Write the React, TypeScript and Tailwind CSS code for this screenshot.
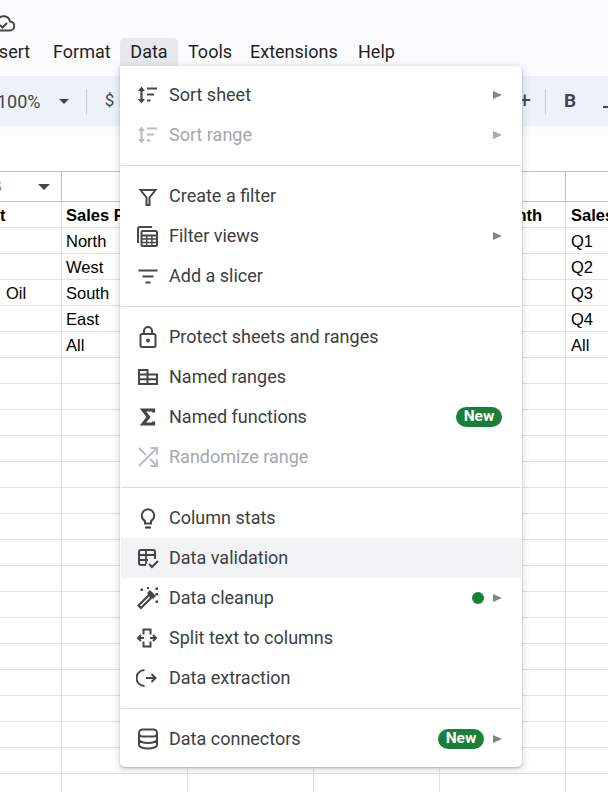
const sheetRows = [
  ["t", "Sales F", "Sales Month", "Sales"],
  ["", "North", "", "Q1"],
  ["", "West", "", "Q2"],
  ["Oil", "South", "", "Q3"],
  ["", "East", "", "Q4"],
  ["", "All", "", "All"],
];

const Icon = ({ children, muted }: { children: React.ReactNode; muted?: boolean }) => (
  <svg
    viewBox="0 0 24 24"
    className={`h-6 w-6 shrink-0 ${muted ? "text-[#b9bcc0]" : "text-[#444746]"}`}
    fill="none"
    stroke="currentColor"
    strokeWidth="2"
  >
    {children}
  </svg>
);

const icons: Record<string, React.ReactNode> = {
  sort: (
    <>
      <path d="M5.500 6v12" strokeWidth="2.200" />
      <path d="M2 8l3.500-4.500L9 8zM2 16l3.500 4.500L9 16z" fill="currentColor" stroke="none" />
      <path d="M11 5.500h10M11 11.500h7M11 17.500h3.500" strokeWidth="1.800" />
    </>
  ),
  filter: <path d="M4.500 6h15l-6 7.500V21h-3v-7.500z" strokeWidth="2" />,
  views: (
    <>
      <path d="M2 19V5a2 2 0 0 1 2-2h12" />
      <rect x="5.500" y="7" width="15.500" height="15" rx="1.500" />
      <path d="M5.500 11.500H21" strokeWidth="2" />
      <path d="M5.500 15h15.500M5.500 18.500h15.500M10.700 11.500V22M15.900 11.500V22" strokeWidth="1.400" />
    </>
  ),
  slicer: <path d="M2.500 6.500h19M6.500 12.500h11M9.500 18.500h5" />,
  lock: (
    <>
      <rect x="4.500" y="9" width="15" height="13" rx="1.500" />
      <path d="M8 9V6a4 4 0 0 1 8 0v3" />
      <circle cx="12" cy="15.500" r="2" fill="currentColor" stroke="none" />
    </>
  ),
  ranges: <path d="M3 5h8.500v14H3zM11.500 9.500H21V19h-9.500M3 9.500h8.500M3 14.200h18M11.500 9.500V19" />,
  sigma: <path d="M17.500 7.500V5H7l5.500 7L7 19h10.500v-2.500" strokeWidth="3.200" />,
  random: <path d="m3 3 7 7M3 21 21 3M14.500 3H21v6.500M14 14l7 7M14.500 21H21v-6.500" />,
  bulb: (
    <>
      <path d="M9 17.500h6v-2.300c2-1.300 3.200-3.300 3.200-5.700a6.200 6.200 0 0 0-12.400 0c0 2.400 1.200 4.400 3.200 5.700z" />
      <path d="M9 21.500h6" strokeWidth="2.200" />
    </>
  ),
  validate: (
    <>
      <path d="M10 19H5a2 2 0 0 1-2-2V6a2 2 0 0 1 2-2h12a2 2 0 0 1 2 2v7" />
      <path d="M3 9h16M3 14h9M10 4v14" strokeWidth="1.800" />
      <path d="m13 18 3 3 6-6" />
    </>
  ),
  wand: (
    <>
      <path d="M2.500 19.500 13 9l2.500 2.500L5 22z" strokeWidth="2.200" />
      <path d="m12.500 5.500 6 6" strokeWidth="4" />
      <path
        d="M4.500 2.500H7v2.500H4.500zM11 1h2v2h-2zM19.500 1.500H22V4h-2.500zM19.500 7H22v2.500h-2.500zM19.500 14.500H22V17h-2.500z"
        fill="currentColor"
        stroke="none"
      />
    </>
  ),
  split: (
    <>
      <path d="M7.500 8.500v-5h7v5M7.500 15.500v5h7v-5" strokeWidth="2" />
      <path d="M2 12h6M14 12h6M5 9l-3 3 3 3M17 9l3 3-3 3" strokeWidth="2" />
    </>
  ),
  extract: (
    <>
      <path d="M8.500 4a8 8 0 0 0 0 16" strokeWidth="2" />
      <path d="M10 12h9.500M15.500 8l4 4-4 4" strokeWidth="2" />
    </>
  ),
  db: (
    <>
      <rect x="3" y="2.500" width="18" height="7" rx="3.500" />
      <path d="M3 6v12c0 2 4 3.500 9 3.500s9-1.500 9-3.500V6M3 12.500c0 2 4 3.500 9 3.500s9-1.500 9-3.500" />
    </>
  ),
};

const NewBadge = () => (
  <span className="flex h-5 w-[46px] items-center justify-center rounded-full bg-[#188038] text-[15.500px] font-bold text-white">
    New
  </span>
);

const Arrow = ({ muted }: { muted?: boolean }) => (
  <span
    className={`block h-0 w-0 border-y-[4.500px] border-l-[9px] border-y-transparent ${
      muted ? "border-l-[#a9abae]" : "border-l-[#80868b]"
    }`}
  />
);

type Item = {
  label: string;
  icon: string;
  muted?: boolean;
  arrow?: boolean;
  badge?: boolean;
  dot?: boolean;
  hover?: boolean;
};

const groups: Item[][] = [
  [
    { label: "Sort sheet", icon: "sort", arrow: true },
    { label: "Sort range", icon: "sort", arrow: true, muted: true },
  ],
  [
    { label: "Create a filter", icon: "filter" },
    { label: "Filter views", icon: "views", arrow: true },
    { label: "Add a slicer", icon: "slicer" },
  ],
  [
    { label: "Protect sheets and ranges", icon: "lock" },
    { label: "Named ranges", icon: "ranges" },
    { label: "Named functions", icon: "sigma", badge: true },
    { label: "Randomize range", icon: "random", muted: true },
  ],
  [
    { label: "Column stats", icon: "bulb" },
    { label: "Data validation", icon: "validate", hover: true },
    { label: "Data cleanup", icon: "wand", dot: true, arrow: true },
    { label: "Split text to columns", icon: "split" },
    { label: "Data extraction", icon: "extract" },
  ],
  [{ label: "Data connectors", icon: "db", badge: true, arrow: true }],
];

function DataMenu() {
  return (
    <div className="absolute left-[120px] top-[66px] w-[402px] rounded-b-[5px] rounded-tr-[5px] bg-white pb-2 pt-[9px] pr-px pl-px shadow-[0_2px_6px_2px_rgba(60,64,67,0.15),0_1px_2px_rgba(60,64,67,0.3)]">
      {groups.map((group, i) => (
        <div key={i}>
          {i > 0 && (
            <div className="flex h-[21px] items-center">
              <div className="h-px w-full bg-[#dadce0]" />
            </div>
          )}
          {group.map((item) => (
            <div
              key={item.label}
              className={`flex h-10 items-center pl-[15px] pr-[19px] ${item.hover ? "bg-[#f1f3f4]" : ""}`}
            >
              <Icon muted={item.muted}>{icons[item.icon]}</Icon>
              <span
                className={`ml-[9px] flex-1 pb-0.5 text-[18px] ${
                  item.muted ? "text-[#a4a7ab]" : "text-[#3c4043]"
                }`}
              >
                {item.label}
              </span>
              {item.dot && <span className="h-3 w-3 rounded-full bg-[#188038]" />}
              {item.badge && <NewBadge />}
              {item.arrow && (
                <span className="ml-[9px]">
                  <Arrow muted={item.muted} />
                </span>
              )}
            </div>
          ))}
        </div>
      ))}
    </div>
  );
}

export default function App() {
  const emptyRows = Array.from({ length: 17 }, (_, i) => i);
  return (
    <div className="relative h-[792px] w-[608px] overflow-hidden bg-white font-['Roboto',sans-serif]">
      {/* header */}
      <div className="h-[76px] overflow-hidden bg-[#f9fbfd]">
        <svg viewBox="0 0 24 24" className="-ml-[9px] mt-[11px] h-6 w-6 text-[#444746]" fill="none" stroke="currentColor" strokeWidth="2">
          <path d="M7 19.500a5 5 0 0 1-.5-10A6.500 6.500 0 0 1 19 10.500a4.500 4.500 0 0 1-.5 9z" />
          <path d="m9 14 2.500 2.500L16 12" />
        </svg>
        <div className="-ml-[16px] mt-[3px] flex h-7 items-center text-[18px] text-[#1f1f1f]">
          <span className="w-[69px] pb-0.5">Insert</span>
          <span className="w-[67px] pb-0.5">Format</span>
          <span className="flex h-7 w-[58px] items-center justify-center rounded-t-[5px] bg-[#e6e9ec] pb-0.5">Data</span>
          <span className="ml-[10px] w-[62px] pb-0.5">Tools</span>
          <span className="w-[108px] pb-0.5">Extensions</span>
          <span className="pb-0.5">Help</span>
        </div>
      </div>

      {/* toolbar */}
      <div className="flex h-[50px] items-center bg-[#edf2fa] text-[#444746]">
        <span className="-ml-[3px] w-[62px] text-[18px]">100%</span>
        <span className="h-0 w-0 border-x-[5.500px] border-t-[5.500px] border-x-transparent border-t-[#444746]" />
        <span className="ml-[17px] h-[25px] w-px bg-[#c7c7c7]" />
        <span className="ml-[18px] w-[416px] text-[17px]">$</span>
        <span className="text-[22px] leading-none">+</span>
        <span className="ml-[14px] h-[25px] w-px bg-[#c7c7c7]" />
        <span className="ml-[18px] text-[19px] font-bold">B</span>
        <span className="ml-[27px] mt-[12px] h-0.5 w-[5px] bg-[#444746]" />
      </div>
      <div className="h-[10px] bg-[#f9fbfd]" />
      <div className="h-[35px]" />

      {/* grid */}
      <div className="font-['Liberation_Sans',sans-serif] text-[16.500px] text-black">
        <div className="grid h-[31px] grid-cols-[62px_126px_126px_126px_126px_126px] border-y border-[#c0c0c0]">
          <div className="flex items-center justify-between overflow-hidden border-r border-[#c0c0c0] pr-[11px]">
            <span className="-ml-[9px] text-[#c5764a]">B</span>
            <span className="h-0 w-0 border-x-[6px] border-t-[6px] border-x-transparent border-t-[#444746]" />
          </div>
          <div />
          <div />
          <div />
          <div className="border-r border-[#c0c0c0]" />
          <div />
        </div>
        {sheetRows.map((row, r) => (
          <div key={r} className="grid h-[26px] grid-cols-[62px_126px_126px_126px_126px_126px] border-b border-[#e2e2e3] pt-px">
            <div className={`overflow-hidden border-r border-[#e2e2e3] ${r === 0 ? "font-bold" : "pl-[6px]"}`}>
              {row[0]}
            </div>
            <div className={`whitespace-nowrap border-r border-[#e2e2e3] pl-[4px] ${r === 0 ? "font-bold" : ""}`}>{row[1]}</div>
            <div className="border-r border-[#e2e2e3]" />
            <div className="border-r border-[#e2e2e3]" />
            <div className={`whitespace-nowrap border-r border-[#e2e2e3] pl-[5px] ${r === 0 ? "font-bold" : ""}`}>{row[2]}</div>
            <div className={`whitespace-nowrap pl-[5px] ${r === 0 ? "font-bold" : ""}`}>{row[3]}</div>
          </div>
        ))}
        {emptyRows.map((r) => (
          <div key={r} className="grid h-[26px] grid-cols-[62px_126px_126px_126px_126px_126px] border-b border-[#e2e2e3]">
            <div className="border-r border-[#e2e2e3]" />
            <div className="border-r border-[#e2e2e3]" />
            <div className="border-r border-[#e2e2e3]" />
            <div className="border-r border-[#e2e2e3]" />
            <div className="border-r border-[#e2e2e3]" />
            <div />
          </div>
        ))}
      </div>

      <DataMenu />
    </div>
  );
}
